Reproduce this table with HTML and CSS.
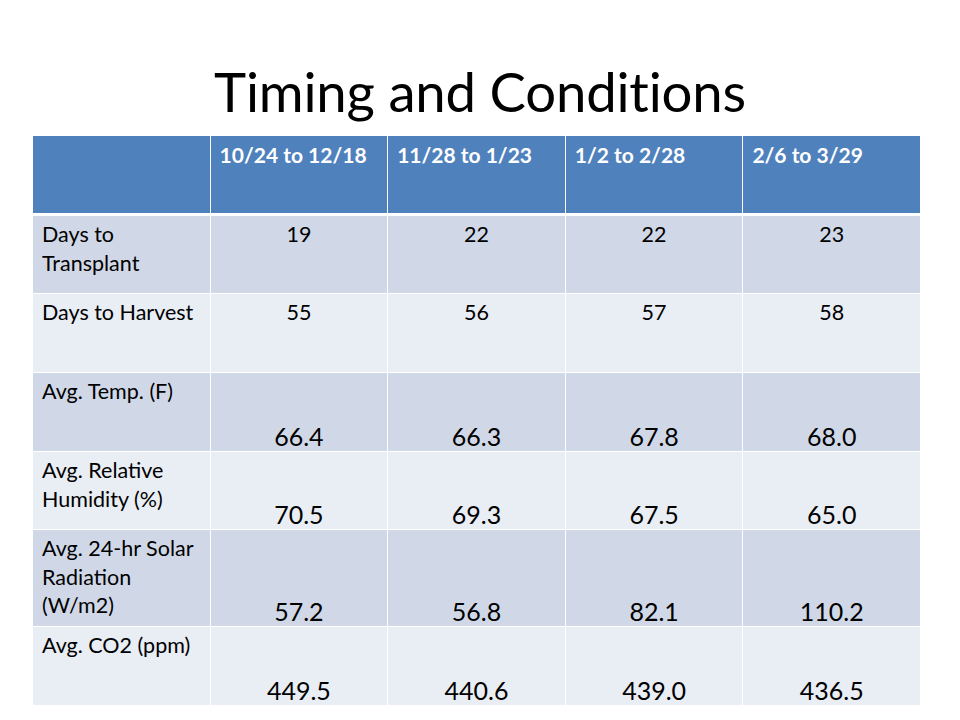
FILE: index.html
```html
<!DOCTYPE html>
<html lang="en">
<head>
<meta charset="utf-8">
<title>Timing and Conditions</title>
<link rel="stylesheet" href="styles.css">
</head>
<body>
<div class="slide">
  <h1 class="title">Timing and Conditions</h1>
  <div class="table">
    <div class="cell head"></div>
    <div class="cell head">10/24 to 12/18</div>
    <div class="cell head">11/28 to 1/23</div>
    <div class="cell head">1/2 to 2/28</div>
    <div class="cell head">2/6 to 3/29</div>

    <div class="cell odd label">Days to<br>Transplant</div>
    <div class="cell odd num">19</div>
    <div class="cell odd num">22</div>
    <div class="cell odd num">22</div>
    <div class="cell odd num">23</div>

    <div class="cell even label">Days to Harvest</div>
    <div class="cell even num">55</div>
    <div class="cell even num">56</div>
    <div class="cell even num">57</div>
    <div class="cell even num">58</div>

    <div class="cell odd label">Avg. Temp. (F)</div>
    <div class="cell odd big">66.4</div>
    <div class="cell odd big">66.3</div>
    <div class="cell odd big">67.8</div>
    <div class="cell odd big">68.0</div>

    <div class="cell even label">Avg. Relative<br>Humidity (%)</div>
    <div class="cell even big">70.5</div>
    <div class="cell even big">69.3</div>
    <div class="cell even big">67.5</div>
    <div class="cell even big">65.0</div>

    <div class="cell odd label">Avg. 24-hr Solar<br>Radiation<br>(W/m2)</div>
    <div class="cell odd big">57.2</div>
    <div class="cell odd big">56.8</div>
    <div class="cell odd big">82.1</div>
    <div class="cell odd big">110.2</div>

    <div class="cell even label">Avg. CO2 (ppm)</div>
    <div class="cell even big">449.5</div>
    <div class="cell even big">440.6</div>
    <div class="cell even big">439.0</div>
    <div class="cell even big">436.5</div>
  </div>
</div>
</body>
</html>
```

FILE: styles.css
```css
html, body {
  margin: 0;
  padding: 0;
  background: #ffffff;
}

.slide {
  width: 960px;
  height: 720px;
  background: #ffffff;
  font-family: Lato, "Open Sans", "Liberation Sans", sans-serif;
  color: #000000;
  display: flex;
  flex-direction: column;
  overflow: hidden;
}

.title {
  margin: 0;
  height: 136px;
  box-sizing: border-box;
  padding-top: 58px;
  font-weight: 400;
  font-size: 54.5px;
  line-height: 66px;
  letter-spacing: -0.2px;
  text-align: center;
  color: #000000;
}

.table {
  width: 887px;
  margin-left: 33px;
  display: grid;
  grid-template-columns: repeat(5, 1fr);
  grid-template-rows: 79px 77px 78px 78px 77px 96px 78px;
  gap: 1px;
  background: #ffffff;
}

.cell {
  box-sizing: border-box;
  padding: 4px 9px 5px 9px;
  font-size: 21.5px;
  line-height: 28.5px;
}

.head {
  background: #4f81bd;
  color: #ffffff;
  font-weight: 700;
  font-size: 21px;
  line-height: 27px;
  margin-bottom: 2px;
  padding-top: 5px;
}

.odd {
  background: #d0d8e8;
}

.even {
  background: #e9edf4;
}

.label {
  text-align: left;
}

.num {
  text-align: center;
}

.big {
  display: flex;
  align-items: flex-end;
  justify-content: center;
  font-size: 25px;
  line-height: 28px;
  padding-bottom: 1px;
}
```
